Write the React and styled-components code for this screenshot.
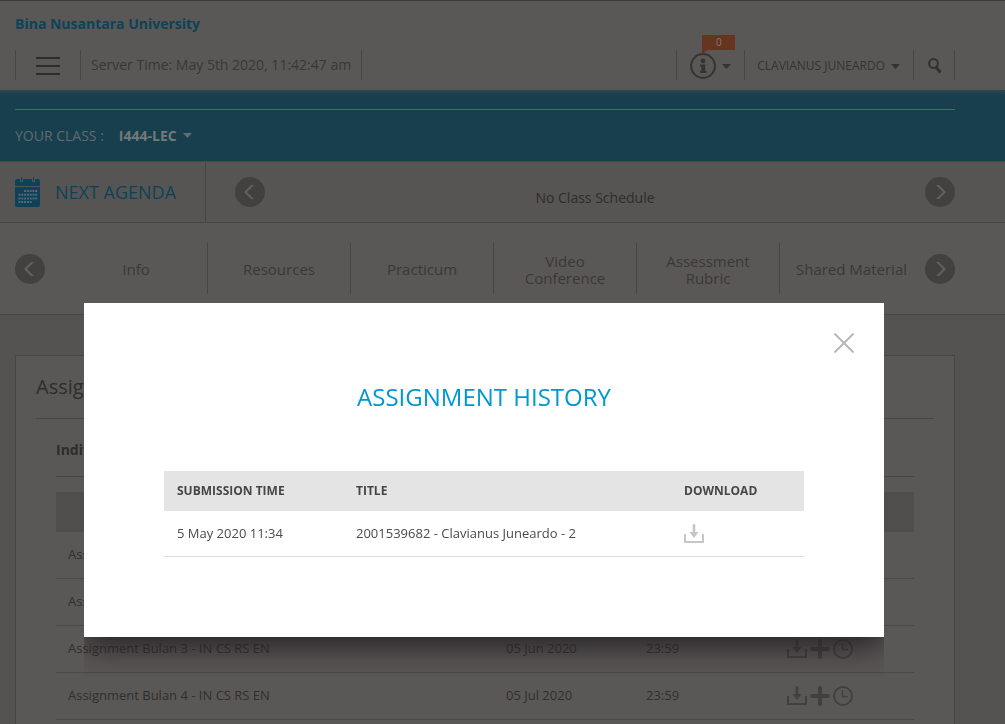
import React from "react";
import styled, { createGlobalStyle } from "styled-components";

const c = {
  page: "#555351",
  panel: "#5a5856",
  line: "#484644",
  ink: "#2e2c2d",
  icon: "#41403e",
  brand: "#0d4258",
  teal: "#173f4d",
};

const GlobalStyle = createGlobalStyle`
  *, *::before, *::after { box-sizing: border-box; }
  body {
    margin: 0;
    font-family: "Open Sans", "Noto Sans", sans-serif;
    font-size: 13px;
    color: ${c.ink};
    background: ${c.page};
  }
  button, select { font: inherit; color: inherit; background: none; border: 0; padding: 0; margin: 0; }
  h1, h2, h3, p { margin: 0; }
  a { color: inherit; text-decoration: none; }
  svg { display: block; }
`;

const Page = styled.div`
  height: 100vh;
  overflow: hidden;
`;

const Header = styled.header`
  background: ${c.panel};
  border-top: 1px solid #3b3a38;
  padding: 13px 50px 10px 15px;
`;

const Brand = styled.a`
  display: block;
  font-size: 14px;
  line-height: 20px;
  font-weight: 700;
  color: ${c.brand};
`;

const Toolbar = styled.div`
  display: flex;
  justify-content: space-between;
  margin-top: 16px;
  height: 30px;
`;

const ToolGroup = styled.div`
  display: flex;
  border-right: 1px solid ${c.line};
`;

const Tool = styled.div`
  position: relative;
  display: flex;
  align-items: center;
  padding: 0 ${(p) => p.$right}px 0 ${(p) => p.$left}px;
  border-left: 1px solid ${c.line};
`;

const ToolButton = styled.button`
  display: flex;
  align-items: center;
  gap: 6px;
  font-size: 12px;
  color: #353332;
  white-space: nowrap;
  svg { margin-top: 2px; }
`;

const ServerTime = styled.p`
  font-size: 14px;
  line-height: 30px;
  color: #393735;
`;

const Badge = styled.span`
  position: absolute;
  left: 25px;
  top: -15px;
  width: 33px;
  height: 15px;
  background: #66341f;
  color: #857a74;
  font-size: 10px;
  line-height: 15px;
  text-align: center;
  &::after {
    content: "";
    position: absolute;
    left: 0;
    top: 15px;
    border-top: 4px solid #66341f;
    border-right: 6px solid transparent;
  }
`;

const ClassBar = styled.section`
  background: linear-gradient(#284950, ${c.teal} 6px);
  padding: 19px 50px 0 15px;
  height: 71px;
`;

const ClassPicker = styled.div`
  display: flex;
  align-items: center;
  border-top: 1px solid #5c6062;
  height: 52px;
  font-size: 14px;
  color: #5f6c70;
`;

const ClassSelect = styled.select`
  appearance: none;
  margin: 0 6px 0 15px;
  font-size: 14px;
  font-weight: 700;
  color: #73797b;
`;

const Agenda = styled.section`
  display: flex;
  align-items: center;
  height: 62px;
  padding: 0 50px 0 15px;
  background: #575553;
  border-top: 1px solid ${c.line};
  border-bottom: 1px solid ${c.line};
`;

const AgendaTitle = styled.h2`
  display: flex;
  align-items: center;
  align-self: stretch;
  gap: 15px;
  width: 191px;
  margin-right: 29px;
  border-right: 1px solid ${c.line};
  font-size: 18px;
  font-weight: 400;
  color: ${c.brand};
  white-space: nowrap;
`;

const AgendaText = styled.p`
  flex: 1;
  padding-top: 10px;
  font-size: 14px;
  text-align: center;
`;

const RoundButton = styled.button`
  flex: none;
  width: 30px;
  height: 30px;
  border-radius: 50%;
  background: #42413f;
`;

const Tabs = styled.nav`
  display: flex;
  align-items: center;
  height: 92px;
  padding: 0 50px 0 15px;
  background: ${c.panel};
  border-bottom: 1px solid ${c.line};
`;

const TabList = styled.div`
  flex: 1;
  display: grid;
  grid-template-columns: repeat(6, 1fr);
  margin: 0 2px 0 20px;
`;

const Tab = styled.a`
  display: flex;
  align-items: center;
  justify-content: center;
  height: 51px;
  padding: 2px 15px 0;
  border-right: 1px solid ${c.line};
  font-size: 15px;
  line-height: 17px;
  text-align: center;
  color: #3a3739;
  &:last-child { border-right: 0; padding: 2px 0 0; }
`;

const Card = styled.main`
  margin: 40px 50px 0 15px;
  padding: 0 20px 40px;
  background: ${c.panel};
  border: 1px solid ${c.line};
`;

const CardTitle = styled.h1`
  font-size: 20px;
  font-weight: 400;
  line-height: 62px;
  border-bottom: 1px solid ${c.line};
`;

const Section = styled.section`
  padding: 0 20px;
`;

const SectionTitle = styled.h3`
  padding-top: 5px;
  margin-bottom: 15px;
  font-size: 14px;
  line-height: 52px;
  border-bottom: 1px solid ${c.line};
`;

const Table = styled.table`
  width: 100%;
  table-layout: fixed;
  border-collapse: separate;
  border-spacing: 0;
  text-align: left;
`;

const HeadCell = styled.th`
  width: ${(p) => p.$width || "auto"};
  height: 40px;
  padding: 0 13px 2px;
  font-size: 12px;
  font-weight: 700;
  background: ${(p) => (p.$light ? "#e4e4e4" : "#504e4c")};
  color: ${(p) => (p.$light ? "#484545" : c.ink)};
`;

const Cell = styled.td`
  height: ${(p) => (p.$light ? 46 : 47)}px;
  padding: 0 ${(p) => (p.$light ? 13 : 12)}px 2px;
  font-size: 13px;
  color: ${(p) => (p.$light ? "#4d4a4a" : "#302e2f")};
  border-bottom: 1px solid ${(p) => (p.$light ? "#dedede" : "#4c4a48")};
`;

const Actions = styled.div`
  display: flex;
  gap: 3px;
  padding-top: 2px;
  color: ${c.icon};
`;

const IconButton = styled.button`
  display: block;
  width: 20px;
  height: 20px;
`;

const Overlay = styled.div`
  position: fixed;
  inset: 0;
  padding: 303px 37px 0 0;
`;

const Modal = styled.div`
  position: relative;
  max-width: 800px;
  margin: 0 auto;
  padding: 74px 80px 80px;
  background: #fff;
  box-shadow: 0 10px 30px rgb(38, 33, 38);
  clip-path: inset(0 0 -40px 0);
`;

const ModalTitle = styled.h2`
  margin-bottom: 54px;
  font-size: 24px;
  font-weight: 400;
  line-height: 40px;
  text-align: center;
  color: #0098d0;
`;

const CloseButton = styled(IconButton)`
  position: absolute;
  top: 30px;
  right: 30px;
  color: #b8b8b8;
`;

const DownloadButton = styled(IconButton)`
  color: #c6c6c6;
`;

const Caret = () => (
  <svg width="9" height="5" viewBox="0 0 9 5" fill="currentColor" aria-hidden="true">
    <path d="M0 0h9L4.500 5z" />
  </svg>
);

const Chevron = ({ next }) => (
  <svg width="30" height="30" viewBox="0 0 30 30" fill="#62605e" aria-hidden="true">
    {next ? <path d="M11 8h3l7 7-7 7h-3l7-7z" /> : <path d="M19 8h-3l-7 7 7 7h3l-7-7z" />}
  </svg>
);

const MenuIcon = () => (
  <svg width="24" height="18" viewBox="0 0 24 18" fill="#2e2d2b" aria-hidden="true">
    <path d="M0 0h24v2H0zM0 8h24v2H0zM0 16h24v2H0z" />
  </svg>
);

const InfoIcon = () => (
  <svg width="26" height="26" viewBox="0 0 26 26" fill="currentColor" aria-hidden="true">
    <circle cx="13" cy="13" r="11.900" fill="none" stroke="currentColor" strokeWidth="2" />
    <circle cx="13" cy="8" r="2.400" />
    <path d="M10 11.500h5.200v6.500h1.300v2h-6.500v-2h1.300v-4.500H10z" />
  </svg>
);

const SearchIcon = () => (
  <svg width="14" height="16" viewBox="0 0 14 16" fill="none" stroke="#32312f" aria-hidden="true">
    <circle cx="5.500" cy="5.500" r="4.400" strokeWidth="2" />
    <path d="M8 9l4.500 5.500" strokeWidth="2.800" />
  </svg>
);

const CalendarIcon = () => (
  <svg width="25" height="30" viewBox="0 0 25 30" aria-hidden="true">
    <path fill={c.brand} d="M2 2h3v3h3V2h9v3h3V2h3q2 0 2 2v5H0V4q0-2 2-2zM0 10h25v18q0 2-2 2H2q-2 0-2-2z" />
    <path fill="none" stroke={c.brand} d="M6.500 0v4M18.500 0v4" />
    <path
      fill="none"
      stroke="#566971"
      strokeWidth="2"
      strokeDasharray="2 .8"
      d="M9 14h13.200M3.500 17.700h18.700M3.500 21.400h18.700M3.500 25.100h13.200"
    />
  </svg>
);

const DownloadIcon = () => (
  <svg width="20" height="20" viewBox="0 0 20 20" fill="currentColor" aria-hidden="true">
    <path d="M8.700 1.300q0-1.300 1.300-1.300t1.300 1.300V8h3.200L10 14 5.500 8h3.200z" />
    <path d="M1 10v8h18v-8" fill="none" stroke="currentColor" strokeWidth="2" />
  </svg>
);

const PlusIcon = () => (
  <svg width="20" height="20" viewBox="0 0 20 20" aria-hidden="true">
    <path d="M10 2v16M2 10h16" fill="none" stroke="currentColor" strokeWidth="4" strokeLinecap="round" />
  </svg>
);

const ClockIcon = () => (
  <svg width="20" height="20" viewBox="0 0 20 20" fill="none" stroke="currentColor" aria-hidden="true">
    <circle cx="10" cy="10" r="9" strokeWidth="2" />
    <path d="M9.500 4v6.500H15" strokeWidth="1.500" />
  </svg>
);

const CloseIcon = () => (
  <svg width="20" height="20" viewBox="0 0 20 20" aria-hidden="true">
    <path d="M.5.5l19 19M19.500.5l-19 19" stroke="currentColor" strokeWidth="2" />
  </svg>
);

const tabs = ["Info", "Resources", "Practicum", "Video Conference", "Assessment Rubric", "Shared Material"];

const assignments = [
  { title: "Assignment Bulan 1 - IN CS RS EN", date: "05 Apr 2020", time: "23:59" },
  { title: "Assignment Bulan 2 - IN CS RS EN", date: "05 May 2020", time: "23:59" },
  { title: "Assignment Bulan 3 - IN CS RS EN", date: "05 Jun 2020", time: "23:59" },
  { title: "Assignment Bulan 4 - IN CS RS EN", date: "05 Jul 2020", time: "23:59" },
];

export default function App() {
  return (
    <>
      <GlobalStyle />
      <Page>
        <Header>
          <Brand href="#">Bina Nusantara University</Brand>
          <Toolbar>
            <ToolGroup>
              <Tool $left={20} $right={20}>
                <ToolButton aria-label="Menu"><MenuIcon /></ToolButton>
              </Tool>
              <Tool $left={10} $right={10}>
                <ServerTime>Server Time: May 5th 2020, 11:42:47 am</ServerTime>
              </Tool>
            </ToolGroup>
            <ToolGroup>
              <Tool $left={13} $right={13}>
                <ToolButton aria-label="Notifications"><InfoIcon /><Caret /></ToolButton>
                <Badge>0</Badge>
              </Tool>
              <Tool $left={12} $right={13}>
                <ToolButton>CLAVIANUS JUNEARDO <Caret /></ToolButton>
              </Tool>
              <Tool $left={14} $right={12}>
                <ToolButton aria-label="Search"><SearchIcon /></ToolButton>
              </Tool>
            </ToolGroup>
          </Toolbar>
        </Header>

        <ClassBar>
          <ClassPicker>
            <label htmlFor="class">YOUR CLASS :</label>
            <ClassSelect id="class" defaultValue="I444-LEC">
              <option>I444-LEC</option>
            </ClassSelect>
            <Caret />
          </ClassPicker>
        </ClassBar>

        <Agenda>
          <AgendaTitle><CalendarIcon />NEXT AGENDA</AgendaTitle>
          <RoundButton aria-label="Previous schedule"><Chevron /></RoundButton>
          <AgendaText>No Class Schedule</AgendaText>
          <RoundButton aria-label="Next schedule"><Chevron next /></RoundButton>
        </Agenda>

        <Tabs>
          <RoundButton aria-label="Previous tabs"><Chevron /></RoundButton>
          <TabList>
            {tabs.map((t) => <Tab href="#" key={t}>{t}</Tab>)}
          </TabList>
          <RoundButton aria-label="Next tabs"><Chevron next /></RoundButton>
        </Tabs>

        <Card>
          <CardTitle>Assignment</CardTitle>
          <Section>
            <SectionTitle>Individual</SectionTitle>
            <Table>
              <thead>
                <tr>
                  <HeadCell aria-label="Title" />
                  <HeadCell $width="140px" aria-label="Date" />
                  <HeadCell $width="141px" aria-label="Time" />
                  <HeadCell $width="139px" aria-label="Action" />
                </tr>
              </thead>
              <tbody>
                {assignments.map((a) => (
                  <tr key={a.title}>
                    <Cell>{a.title}</Cell>
                    <Cell>{a.date}</Cell>
                    <Cell>{a.time}</Cell>
                    <Cell>
                      <Actions>
                        <IconButton aria-label="Download"><DownloadIcon /></IconButton>
                        <IconButton aria-label="Add"><PlusIcon /></IconButton>
                        <IconButton aria-label="History"><ClockIcon /></IconButton>
                      </Actions>
                    </Cell>
                  </tr>
                ))}
              </tbody>
            </Table>
          </Section>
        </Card>
      </Page>

      <Overlay>
        <Modal role="dialog" aria-modal="true" aria-labelledby="history-title">
          <CloseButton aria-label="Close"><CloseIcon /></CloseButton>
          <ModalTitle id="history-title">ASSIGNMENT HISTORY</ModalTitle>
          <Table>
            <thead>
              <tr>
                <HeadCell $light $width="179px">SUBMISSION TIME</HeadCell>
                <HeadCell $light>TITLE</HeadCell>
                <HeadCell $light $width="133px">DOWNLOAD</HeadCell>
              </tr>
            </thead>
            <tbody>
              <tr>
                <Cell $light>5 May 2020 11:34</Cell>
                <Cell $light>2001539682 - Clavianus Juneardo - 2</Cell>
                <Cell $light>
                  <Actions>
                    <DownloadButton aria-label="Download"><DownloadIcon /></DownloadButton>
                  </Actions>
                </Cell>
              </tr>
            </tbody>
          </Table>
        </Modal>
      </Overlay>
    </>
  );
}
